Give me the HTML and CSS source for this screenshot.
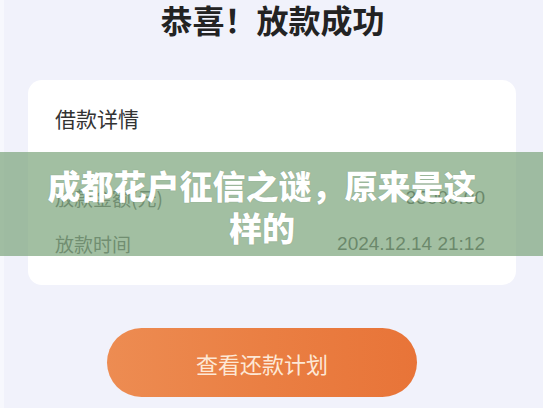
FILE: index.html
```html
<!DOCTYPE html>
<html lang="zh">
<head>
<meta charset="utf-8">
<link rel="stylesheet" href="styles.css">
</head>
<body>
<div class="page">
  <h1 class="title">恭喜！放款成功</h1>
  <div class="card">
    <div class="card-title">借款详情</div>
    <div class="row"><span class="label">放款金额(元)</span><span class="value">35000.00</span></div>
    <div class="row row-second"><span class="label">放款时间</span><span class="value">2024.12.14 21:12</span></div>
  </div>
  <div class="btn">查看还款计划</div>
</div>
<div class="banner">成都花户征信之谜，原来是这<br>样的</div>
</body>
</html>
```
FILE: styles.css
```css
html, body {
  margin: 0;
  padding: 0;
}
body {
  width: 543px;
  height: 408px;
  overflow: hidden;
  background: #f1f2fb;
  font-family: "Noto Sans CJK SC", "Noto Sans", sans-serif;
  position: relative;
}
.page {
  display: flex;
  flex-direction: column;
  border-left: 4px solid #f7f8fd;
  height: 408px;
  box-sizing: border-box;
}
.title {
  margin: 0;
  font-size: 32px;
  line-height: 38px;
  font-weight: 700;
  color: #232323;
  text-align: center;
  padding-right: 2px;
}
.card {
  margin: 42px 0 0 24px;
  width: 488px;
  height: 205px;
  box-sizing: border-box;
  background: #ffffff;
  border-radius: 14px;
  padding: 23px 31px 0 27px;
  display: flex;
  flex-direction: column;
}
.card-title {
  font-size: 21px;
  line-height: 30px;
  color: #333;
}
.row {
  display: flex;
  justify-content: space-between;
  align-items: center;
  margin-top: 50px;
  line-height: 30px;
}
.row-second {
  margin-top: 16px;
}
.label {
  font-size: 19px;
  color: #666;
}
.value {
  font-family: "Liberation Sans", Arial, sans-serif;
  font-size: 19px;
  color: #555;
}
.btn {
  margin: 43px 0 0 103px;
  width: 310px;
  height: 69px;
  border-radius: 35px;
  background: linear-gradient(90deg, #ed8c52 0%, #ea7f43 50%, #e87438 100%);
  color: #fde8d6;
  font-size: 22px;
  display: flex;
  align-items: center;
  justify-content: center;
}
.banner {
  position: absolute;
  left: 0;
  top: 152px;
  width: 543px;
  height: 104px;
  box-sizing: border-box;
  padding: 12px 19px 0 0;
  background: rgba(118, 160, 118, 0.68);
  color: #ffffff;
  font-size: 33px;
  font-weight: 900;
  line-height: 42px;
  text-align: center;
  text-shadow: 0 0 1px rgba(60, 80, 60, 0.4);
}
```
